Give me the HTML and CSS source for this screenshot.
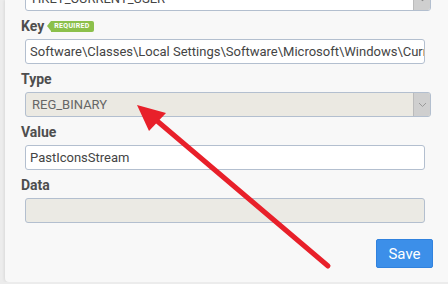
FILE: index.html
```html
<!DOCTYPE html>
<html lang="en">
<head>
    <meta charset="UTF-8">
    <meta name="viewport" content="width=device-width, initial-scale=1.0">
    <title>Edit Registry Value</title>
    <link rel="stylesheet" href="styles.css">
</head>
<body>
    <div class="panel">
        <div class="field">
            <div class="select">
                <span class="select-text">HKEY_CURRENT_USER</span>
                <span class="select-btn"><svg width="9" height="6" viewBox="0 0 9 6"><path d="M1 1 L4.5 4.5 L8 1" fill="none" stroke="#888" stroke-width="1.2"/></svg></span>
            </div>
        </div>

        <div class="field">
            <div class="field-label">Key <span class="badge">Required</span></div>
            <div class="input">Software\Classes\Local Settings\Software\Microsoft\Windows\CurrentVersion\TrayNotify</div>
        </div>

        <div class="field">
            <div class="field-label">Type</div>
            <div class="select disabled">
                <span class="select-text">REG_BINARY</span>
                <span class="select-btn"><svg width="9" height="6" viewBox="0 0 9 6"><path d="M1 1 L4.5 4.5 L8 1" fill="none" stroke="#999" stroke-width="1"/></svg></span>
            </div>
        </div>

        <div class="field">
            <div class="field-label">Value</div>
            <div class="input">PastIconsStream</div>
        </div>

        <div class="field">
            <div class="field-label">Data</div>
            <div class="input disabled"></div>
        </div>

        <div class="actions">
            <button class="btn-save">Save</button>
        </div>
    </div>

    <!-- annotation arrow drawn over the form -->
    <svg class="annotation" width="448" height="284" viewBox="0 0 448 284">
        <line x1="328" y1="266" x2="156" y2="120" stroke="#e8202a" stroke-width="5" stroke-linecap="round"/>
        <polygon points="137,105 166,113 149,131" fill="#e8202a"/>
    </svg>
</body>
</html>
```

FILE: styles.css
```css
body {
    margin: 0;
    background-color: #ececec;
    font-family: Roboto, "Liberation Sans", sans-serif;
    color: #444;
    overflow: hidden;
}
.panel {
    margin-left: 5px;
    height: 282px;
    padding: 0 0 0 16px;
    box-sizing: border-box;
    background-color: #f8f8f8;
    border-bottom-left-radius: 4px;
    box-shadow: -1px 0 3px rgba(0, 0, 0, 0.08);
    overflow: hidden;
}
.field {
    margin-bottom: 6px;
}
.field:first-child {
    margin-top: -14px;
}
.field-label {
    display: flex;
    align-items: center;
    height: 18px;
    margin-bottom: 4px;
    font-size: 14px;
    font-weight: bold;
    color: #4e4e4e;
}
.badge {
    position: relative;
    margin-left: 7px;
    height: 11px;
    padding: 0 4px 0 3px;
    background-color: #8cc04b;
    border-radius: 0 2px 2px 0;
    color: #fff;
    font-size: 7px;
    line-height: 11px;
    letter-spacing: 0.3px;
    text-transform: uppercase;
}
.badge::before {
    content: "";
    position: absolute;
    left: -4px;
    top: 0;
    border-style: solid;
    border-width: 5.5px 4px 5.5px 0;
    border-color: transparent #8cc04b transparent transparent;
}
.input,
.select {
    box-sizing: border-box;
    height: 25px;
    margin-left: 4px;
    width: 400px;
    border: 1px solid #b3bfcf;
    border-radius: 3px;
    background-color: #fff;
    font-size: 13px;
    line-height: 23px;
    padding: 0 4px;
    white-space: nowrap;
    overflow: hidden;
    color: #444;
}
.input.disabled {
    background-color: #ebeae4;
}
.select {
    display: flex;
    width: 406px;
    padding-right: 0;
}
.select.disabled {
    background-color: #ebe9e2;
    color: #666;
}
.select-text {
    flex: 1;
    padding-left: 2px;
}
.select-btn {
    width: 16px;
    display: flex;
    align-items: center;
    justify-content: center;
    background-color: #cfcfcf;
    border-left: 1px solid #bbb;
}
.actions {
    display: flex;
    justify-content: flex-end;
    width: 412px;
    margin-top: 16px;
}
.btn-save {
    width: 57px;
    height: 29px;
    border: 1px solid #3182de;
    border-radius: 2px;
    background-color: #3c8fe9;
    color: #fff;
    font-family: Roboto, "Liberation Sans", sans-serif;
    font-size: 15px;
    padding: 0;
}
.annotation {
    position: absolute;
    left: 0;
    top: 0;
    pointer-events: none;
}
```
